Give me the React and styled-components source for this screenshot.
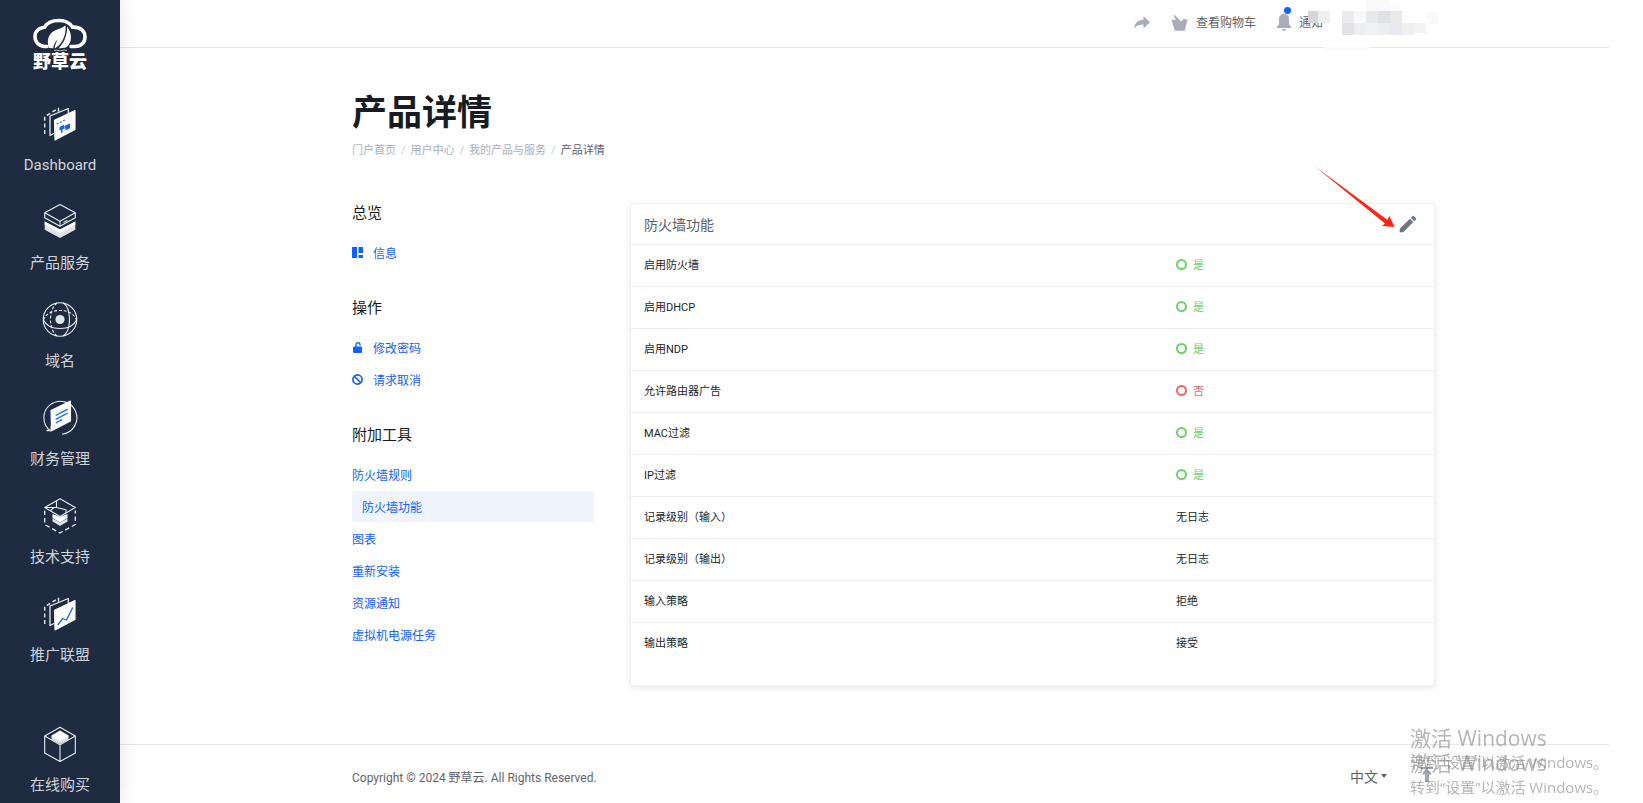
import React from "react";
import styled, { createGlobalStyle } from "styled-components";
import { MdEdit } from "react-icons/md";

const GlobalStyle = createGlobalStyle`
  *,
  *::before,
  *::after {
    box-sizing: border-box;
  }

  body {
    margin: 0;
    background: #fff;
    color: #212529;
    font-family: Roboto, "Noto Sans CJK SC", sans-serif;
    font-size: 12px;
  }

  a {
    text-decoration: none;
  }
`;

const Layout = styled.div`
  display: flex;
  height: 100vh;
  overflow: hidden;
`;

const Sidebar = styled.aside`
  flex: 0 0 120px;
  display: flex;
  flex-direction: column;
  background: #1e2b41;
  box-shadow: 0 0 20px rgba(0, 0, 0, 0.12);
  z-index: 1;
`;

const Brand = styled.a`
  display: flex;
  flex-direction: column;
  align-items: center;
  flex: none;
  height: 91px;
  padding-top: 17px;
  color: #fff;
`;

const BrandName = styled.span`
  font-size: 18px;
  line-height: 18px;
  font-weight: 900;
`;

const SideItem = styled.a`
  display: flex;
  flex-direction: column;
  align-items: center;
  gap: 13px;
  flex: none;
  height: 98px;
  padding: 15px 0 14px;
  margin-top: ${(props) => (props.$separate ? "32px" : "0")};
  color: #d0d4da;
  font-size: 15px;
  line-height: 20px;
`;

const Page = styled.div`
  flex: 1;
  display: flex;
  flex-direction: column;
  margin-right: 34px;
`;

const Container = styled.div`
  position: relative;
  width: 100%;
  max-width: 1083px;
  margin: 0 auto;
`;

const TopBar = styled.header`
  flex: none;
  height: 48px;
  padding-left: 58px;
  border-bottom: 1px solid #e8e8ea;
`;

const TopLinks = styled(Container)`
  display: flex;
  justify-content: flex-end;
  align-items: center;
  gap: 21px;
  height: 45px;
  padding-right: 112px;
`;

const TopLink = styled.a`
  position: relative;
  display: flex;
  align-items: center;
  gap: 8px;
  color: #60646d;
  line-height: 20px;

  svg {
    color: #a9adba;
  }
`;

const Dot = styled.span`
  position: absolute;
  top: -6px;
  left: 7px;
  width: 7px;
  height: 7px;
  border-radius: 50%;
  background: #1062fe;
`;

const Masked = styled.svg`
  position: absolute;
  top: 0;
  right: -5px;
`;

const Main = styled.main`
  flex: 1;
  padding: 42px 0 0 58px;
`;

const PageTitle = styled.h1`
  margin: 0;
  font-size: 35px;
  line-height: 48px;
  font-weight: 700;
  color: #181c21;
`;

const Breadcrumb = styled.ol`
  display: flex;
  margin: 3px 0 42px;
  padding: 0;
  list-style: none;
  font-size: 11px;
  line-height: 20px;
  color: #5d616a;

  li + li::before {
    content: "/";
    padding: 0 5px;
    color: #c4c6cc;
  }

  a {
    color: #a9adb7;
  }
`;

const Columns = styled.div`
  display: flex;
  align-items: flex-start;
  gap: 36px;
`;

const SubNav = styled.nav`
  flex: 0 0 242px;
  margin-top: -2px;
`;

const NavGroup = styled.section`
  display: flex;
  flex-direction: column;
  gap: 1px;
  margin-bottom: 28px;
`;

const NavTitle = styled.h2`
  margin: 0 0 11px;
  font-size: 15px;
  line-height: 24px;
  font-weight: 400;
  color: #181c21;
`;

const NavLink = styled.a`
  display: flex;
  align-items: center;
  gap: 9px;
  height: 31px;
  padding-left: ${(props) => (props.$active ? "10px" : "0")};
  border-radius: 3px;
  background: ${(props) => (props.$active ? "#eff4ff" : "transparent")};
  color: #1062fe;
`;

const NavIcon = styled.span`
  display: flex;
  width: 12px;
`;

const Card = styled.section`
  position: relative;
  flex: 1;
  padding-bottom: 20px;
  border: 1px solid #f1f1f3;
  border-radius: 3px;
  background: #fff;
  box-shadow: 0 2px 6px rgba(24, 28, 33, 0.1);
`;

const CardHeader = styled.div`
  display: flex;
  align-items: center;
  justify-content: space-between;
  height: 40px;
  padding: 0 15px 0 13px;
`;

const CardTitle = styled.h3`
  margin: 0;
  font-size: 14px;
  font-weight: 400;
  color: #5d6269;
`;

const EditButton = styled.button`
  display: flex;
  padding: 0;
  border: none;
  background: none;
  color: #707782;
  cursor: pointer;
`;

const Pointer = styled.svg`
  position: absolute;
  top: -39px;
  right: 38px;
  pointer-events: none;
`;

const Table = styled.table`
  width: 100%;
  border-collapse: collapse;
  font-size: 11px;

  th,
  td {
    height: 42px;
    padding: 0 13px 3px;
    border-top: 1px solid #eeeef0;
    text-align: left;
    font-weight: 400;
  }

  th {
    width: 66%;
  }

  td {
    padding-left: 15px;
  }
`;

const Status = styled.span`
  display: flex;
  align-items: center;
  gap: 6px;
  color: ${(props) => (props.$on ? "#6fcf6b" : "#f36464")};

  &::before {
    content: "";
    width: 11px;
    height: 11px;
    border: 2px solid currentColor;
    border-radius: 50%;
  }
`;

const Footer = styled.footer`
  flex: none;
  height: 59px;
  padding-left: 58px;
  border-top: 1px solid #e8e8ea;
  color: #60646d;
`;

const FooterRow = styled(Container)`
  display: flex;
  align-items: center;
  height: 62px;
`;

const Copyright = styled.span`
  flex: 1;
`;

const LangButton = styled.button`
  display: flex;
  align-items: center;
  gap: 3px;
  margin-right: 34px;
  padding: 0;
  border: none;
  background: none;
  color: #5a5e67;
  font-family: inherit;
  font-size: 14px;

  &::after {
    content: "";
    border: 3px solid transparent;
    border-top: 4px solid #5a5e67;
    border-bottom: none;
  }
`;

const ToTop = styled.a`
  display: flex;
  color: #9ea6b8;
`;

const Watermark = styled.div`
  position: fixed;
  right: 36px;
  bottom: ${(props) => props.$bottom};
  width: 197px;
  color: rgba(120, 120, 120, 0.55);
  font-family: "Open Sans", "Noto Sans CJK SC", sans-serif;
  font-size: 15px;
  line-height: 22px;
  white-space: nowrap;
  pointer-events: none;
  z-index: 2;

  strong {
    display: block;
    font-size: 21px;
    line-height: 26px;
    font-weight: 400;
  }
`;

const IconBase = ({ children }) => (
  <svg
    width="36"
    height="36"
    viewBox="0 0 36 36"
    fill="none"
    stroke="#e9ebee"
    strokeWidth="1.1"
    strokeLinejoin="round"
  >
    {children}
  </svg>
);

const Panels = ({ children }) => (
  <IconBase>
    <path d="M2.7 28V10.7L16.5 2.3v4" strokeDasharray="4 2.6" strokeWidth="1.4" />
    <path d="M12 27.5 8 29.5V10L26.3 2.5V7" strokeWidth="1.3" />
    <path d="M12.5 14.2 33 4.5v19L13 34Z" fill="#fff" stroke="#fff" />
    {children}
  </IconBase>
);

const DashboardIcon = () => (
  <Panels>
    <path d="m14.8 18 1.6-.8M18 16.4l1.6-.8M21.2 14.8l1.6-.8" stroke="#1062fe" />
    <path
      d="m17.5 21 4.5-2.2v4l-1.5.7v3l-1.5.5v-3l-1.5.5ZM22.5 20l5.500-2.800v5l-2 1-2.500 1.300v-2l-1 .5Z"
      fill="#1062fe"
      stroke="none"
    />
  </Panels>
);

const ProductIcon = () => (
  <IconBase>
    <path d="M2.7 17.5 18 25.5l15.3-8v8.3L18 34 2.7 25.8Z" fill="#dfe1e5" stroke="none" />
    <path d="M2.7 17.5 18 25.5l15.3-8v3L18 29 2.7 20.5Z" fill="#fff" stroke="none" />
    <path d="M18 .5 33.3 8.8v5L18 22.3 2.7 13.8v-5Z" fill="#1e2b41" />
    <path d="M2.7 8.8 18 17.3l15.3-8.5M18 17.3v5M21.5 18.5l4-2.3" />
  </IconBase>
);

const GlobeIcon = () => (
  <IconBase>
    <circle cx="18" cy="17.5" r="16.8" />
    <path d="M21 .8c4 2.5 6.5 9 6.5 16.7S25 31.7 21 34M1.5 18c2.5 5.5 9 8.5 16.5 8.5S32 23.5 34.5 18" />
    <path
      d="M15 1C11 4 8.5 10 8.5 17.5S11 31 15 34M1.5 18C4 11.5 10 8.5 18 8.5S32 11.5 34.5 18"
      strokeDasharray="3 1.8"
    />
    <circle cx="18" cy="17.5" r="4.6" fill="#e2e4e8" stroke="none" />
  </IconBase>
);

const FinanceIcon = () => (
  <IconBase>
    <path d="M8.5 31A16.5 16.5 0 1 1 20 34.2" />
    <path d="M4.5 30.5h4.8V26" strokeWidth="1.5" />
    <path d="m9 10.5 19.5-9.5v20L9.5 30.8Z" fill="#fff" stroke="#fff" />
    <path
      d="m13.7 15.5 12-6.3M13.7 19.3l12-6.3M13.7 23l6.3-3.3"
      stroke="#1062fe"
      strokeWidth="1.4"
    />
  </IconBase>
);

const SupportIcon = () => (
  <IconBase>
    <path d="M2.7 12.5v14L18 35l15.3-8.5v-14" strokeDasharray="4.5 3" strokeWidth="1.3" />
    <path d="M18 .8 33.3 9.5 18 18.5 2.7 9.5Z" />
    <path d="M2.7 9.5h11.8V3M14.5 9.5l9.5 2.3V15M12 9.5l-3.5 3" />
    <path d="m10.5 20.5 7.5 4 7.5-4v3L18 28l-7.5-4.5Z" fill="#dfe1e5" stroke="none" />
    <path d="m10.5 16 7.5 3 7.5-3v4L18 24.5 10.5 20Z" fill="#fff" stroke="none" />
  </IconBase>
);

const AffiliateIcon = () => (
  <Panels>
    <path d="m15.7 29 5-6.5 3.8 1.5 6.2-12.5" stroke="#1062fe" strokeWidth="1.3" />
  </Panels>
);

const OrderIcon = () => (
  <IconBase>
    <path d="m9.5 10 8.5 4.5 8.5-4.5v3.5L18 18l-8.5-4.5Z" fill="#dfe1e5" stroke="none" />
    <path d="m9.5 9.5 8.5-5 8.5 5v1L18 15.2 9.5 10.5Z" fill="#fff" stroke="none" />
    <path d="M18 1.2 33.3 10v17L18 35.5 2.7 27V10ZM2.7 10 18 18.8 33.3 10M18 18.8v16.7" />
  </IconBase>
);

const Logo = () => (
  <svg width="56" height="36" viewBox="0 0 56 36" fill="none">
    <path
      d="M15 29.5h-2C7 29.5 3 25 3 19.5c0-5.2 4-9 9.5-9.3C15 5.500 20.5 3.5 27 3.5c6.500 0 11 2.500 13.500 6.700 7.500-.4 12.500 3.700 12.500 9.700 0 5.500-4 9.600-10 9.600h-4"
      stroke="#fff"
      strokeWidth="3.6"
      strokeLinecap="round"
    />
    <path
      d="M17 31c-3-8 0-15.500 7-18 3.500-1.300 6-2 9.500-4.500.5 5.500-.5 10.500-3 15-2 3.800-4.500 6-8 8 .5-3 1.500-6 3.500-9.500-3 3-4 5.500-5 9.200Z"
      fill="#fff"
    />
    <path d="M35.3 9.5c3 4.500 4.500 9.500 3.200 14.500-.8 3-2.500 5-4.500 6.500l-7.500 1c5.500-5.500 8.500-12.500 8.800-22Z" fill="#fff" />
    <path d="m22 33.500 3-.5 3 1 4-1 3 .5" stroke="#fff" strokeWidth=".7" />
  </svg>
);

const ShareIcon = () => (
  <svg width="16" height="13" viewBox="0 0 16 13" fill="currentColor">
    <path d="M0 12.5C.5 7.5 3.5 4 9.5 3.8V0L16 6.3 9.5 12.5V8.6C5 8.6 2.5 9.700 0 12.5Z" />
  </svg>
);

const BasketIcon = () => (
  <svg width="17" height="16" viewBox="0 0 17 16" fill="currentColor">
    <path d="m2.5.8 1-.8 5 4.800L10 6.500 12.500 4l4 .5-2.300 9.700c-.2 1-.8 1.500-1.700 1.500H5c-1 0-1.500-.5-1.700-1.500L.5 4.700l4.500.1Z" />
  </svg>
);

const BellIcon = () => (
  <svg width="14" height="17" viewBox="0 0 14 17" fill="currentColor">
    <path d="M7 0c3 0 5 2 5 5v5.500l2 2V14H0v-1.500l2-2V5c0-3 2-5 5-5ZM5 15h4c0 1.300-.8 2-2 2s-2-.7-2-2Z" />
  </svg>
);

const InfoIcon = () => (
  <svg width="11" height="11" viewBox="0 0 11 11" fill="currentColor">
    <path d="M0 0h5v11H0ZM6.5 0H11v6H6.5ZM6.5 8H11v3H6.5Z" />
  </svg>
);

const LockIcon = () => (
  <svg width="11" height="11" viewBox="0 0 11 11">
    <path d="M4 5V2.800a2 2 0 0 1 4 0V3.500" fill="none" stroke="currentColor" strokeWidth="1.4" />
    <rect x="1" y="4.5" width="9" height="6.5" rx="1" fill="currentColor" />
  </svg>
);

const CancelIcon = () => (
  <svg width="11" height="11" viewBox="0 0 11 11" fill="none" stroke="currentColor">
    <circle cx="5.5" cy="5.5" r="4.6" strokeWidth="1.7" />
    <path d="m2.5 2.500 6 6" strokeWidth="1.7" />
  </svg>
);

const ArrowUpIcon = () => (
  <svg width="14" height="18" viewBox="0 0 14 18" fill="currentColor">
    <path d="M0 0h12v2H0ZM6 2l5 5.500H8V15H4V7.500H1Z" />
  </svg>
);

const sideItems = [
  { label: "Dashboard", Icon: DashboardIcon },
  { label: "产品服务", Icon: ProductIcon },
  { label: "域名", Icon: GlobeIcon },
  { label: "财务管理", Icon: FinanceIcon },
  { label: "技术支持", Icon: SupportIcon },
  { label: "推广联盟", Icon: AffiliateIcon },
  { label: "在线购买", Icon: OrderIcon, separate: true },
];

const navGroups = [
  { title: "总览", links: [{ label: "信息", Icon: InfoIcon }] },
  {
    title: "操作",
    links: [
      { label: "修改密码", Icon: LockIcon },
      { label: "请求取消", Icon: CancelIcon },
    ],
  },
  {
    title: "附加工具",
    links: [
      { label: "防火墙规则" },
      { label: "防火墙功能", active: true },
      { label: "图表" },
      { label: "重新安装" },
      { label: "资源通知" },
      { label: "虚拟机电源任务" },
    ],
  },
];

const rows = [
  ["启用防火墙", true],
  ["启用DHCP", true],
  ["启用NDP", true],
  ["允许路由器广告", false],
  ["MAC过滤", true],
  ["IP过滤", true],
  ["记录级别（输入）", "无日志"],
  ["记录级别（输出）", "无日志"],
  ["输入策略", "拒绝"],
  ["输出策略", "接受"],
];

// x, y, width, height, fill
const maskBlocks = [
  [66, 0, 24, 11, "#fafafa"],
  [90, 3, 12, 8, "#fcfcfc"],
  [0, 11, 8, 5, "#ffffff"],
  [8, 11, 10, 12, "#d5d6db"],
  [18, 11, 12, 12, "#efeff0"],
  [42, 11, 12, 12, "#ebebed"],
  [54, 11, 12, 12, "#f7f8fa"],
  [66, 11, 12, 12, "#e9e8ea"],
  [78, 11, 12, 12, "#e1e1e6"],
  [90, 11, 12, 12, "#e9e9ec"],
  [126, 12, 12, 12, "#f9fbfb"],
  [42, 23, 12, 12, "#e3e3e6"],
  [54, 23, 12, 12, "#eeeef0"],
  [66, 23, 12, 12, "#f0f2f2"],
  [78, 23, 12, 12, "#ecedf1"],
  [90, 23, 12, 12, "#e9eaf0"],
  [102, 23, 12, 12, "#f0f0f0"],
  [114, 23, 12, 10, "#f3f4f6"],
  [24, 46, 47, 5, "#fcfcfc"],
];

const App = () => (
  <>
    <GlobalStyle />
    <Layout>
      <Sidebar>
        <Brand href="#">
          <Logo />
          <BrandName>野草云</BrandName>
        </Brand>
        {sideItems.map(({ label, Icon, separate }) => (
          <SideItem key={label} href="#" $separate={separate}>
            <Icon />
            {label}
          </SideItem>
        ))}
      </Sidebar>
      <Page>
        <TopBar>
          <TopLinks>
            <TopLink href="#" aria-label="share">
              <ShareIcon />
            </TopLink>
            <TopLink href="#">
              <BasketIcon />
              查看购物车
            </TopLink>
            <TopLink href="#">
              <BellIcon />
              <Dot />
              通知
            </TopLink>
            <Masked width="140" height="54" aria-hidden="true">
              {maskBlocks.map(([x, y, width, height, fill]) => (
                <rect key={`${x}-${y}`} x={x} y={y} width={width} height={height} fill={fill} />
              ))}
            </Masked>
          </TopLinks>
        </TopBar>
        <Main>
          <Container>
            <PageTitle>产品详情</PageTitle>
            <Breadcrumb>
              <li><a href="#">门户首页</a></li>
              <li><a href="#">用户中心</a></li>
              <li><a href="#">我的产品与服务</a></li>
              <li>产品详情</li>
            </Breadcrumb>
            <Columns>
              <SubNav>
                {navGroups.map((group) => (
                  <NavGroup key={group.title}>
                    <NavTitle>{group.title}</NavTitle>
                    {group.links.map(({ label, Icon, active }) => (
                      <NavLink key={label} href="#" $active={active}>
                        {Icon && (
                          <NavIcon>
                            <Icon />
                          </NavIcon>
                        )}
                        {label}
                      </NavLink>
                    ))}
                  </NavGroup>
                ))}
              </SubNav>
              <Card>
                <CardHeader>
                  <CardTitle>防火墙功能</CardTitle>
                  <EditButton type="button" aria-label="edit">
                    <MdEdit size={22} />
                  </EditButton>
                </CardHeader>
                <Table>
                  <tbody>
                    {rows.map(([name, value]) => (
                      <tr key={name}>
                        <th scope="row">{name}</th>
                        <td>
                          {typeof value === "boolean" ? (
                            <Status $on={value}>{value ? "是" : "否"}</Status>
                          ) : (
                            value
                          )}
                        </td>
                      </tr>
                    ))}
                  </tbody>
                </Table>
                <Pointer width="82" height="64" viewBox="0 0 82 64" aria-hidden="true">
                  <path d="M1 1.500 73.500 55 75.500 51 80.500 62 68 61 71 58.500Z" fill="#ff2314" />
                </Pointer>
              </Card>
            </Columns>
          </Container>
        </Main>
        <Footer>
          <FooterRow>
            <Copyright>Copyright © 2024 野草云. All Rights Reserved.</Copyright>
            <LangButton type="button">中文</LangButton>
            <ToTop href="#" aria-label="top">
              <ArrowUpIcon />
            </ToTop>
          </FooterRow>
        </Footer>
      </Page>
    </Layout>
    <Watermark $bottom="30px">
      <strong>激活 Windows</strong>
      转到“设置”以激活 Windows。
    </Watermark>
    <Watermark $bottom="5px">
      <strong>激活 Windows</strong>
      转到“设置”以激活 Windows。
    </Watermark>
  </>
);

export default App;
